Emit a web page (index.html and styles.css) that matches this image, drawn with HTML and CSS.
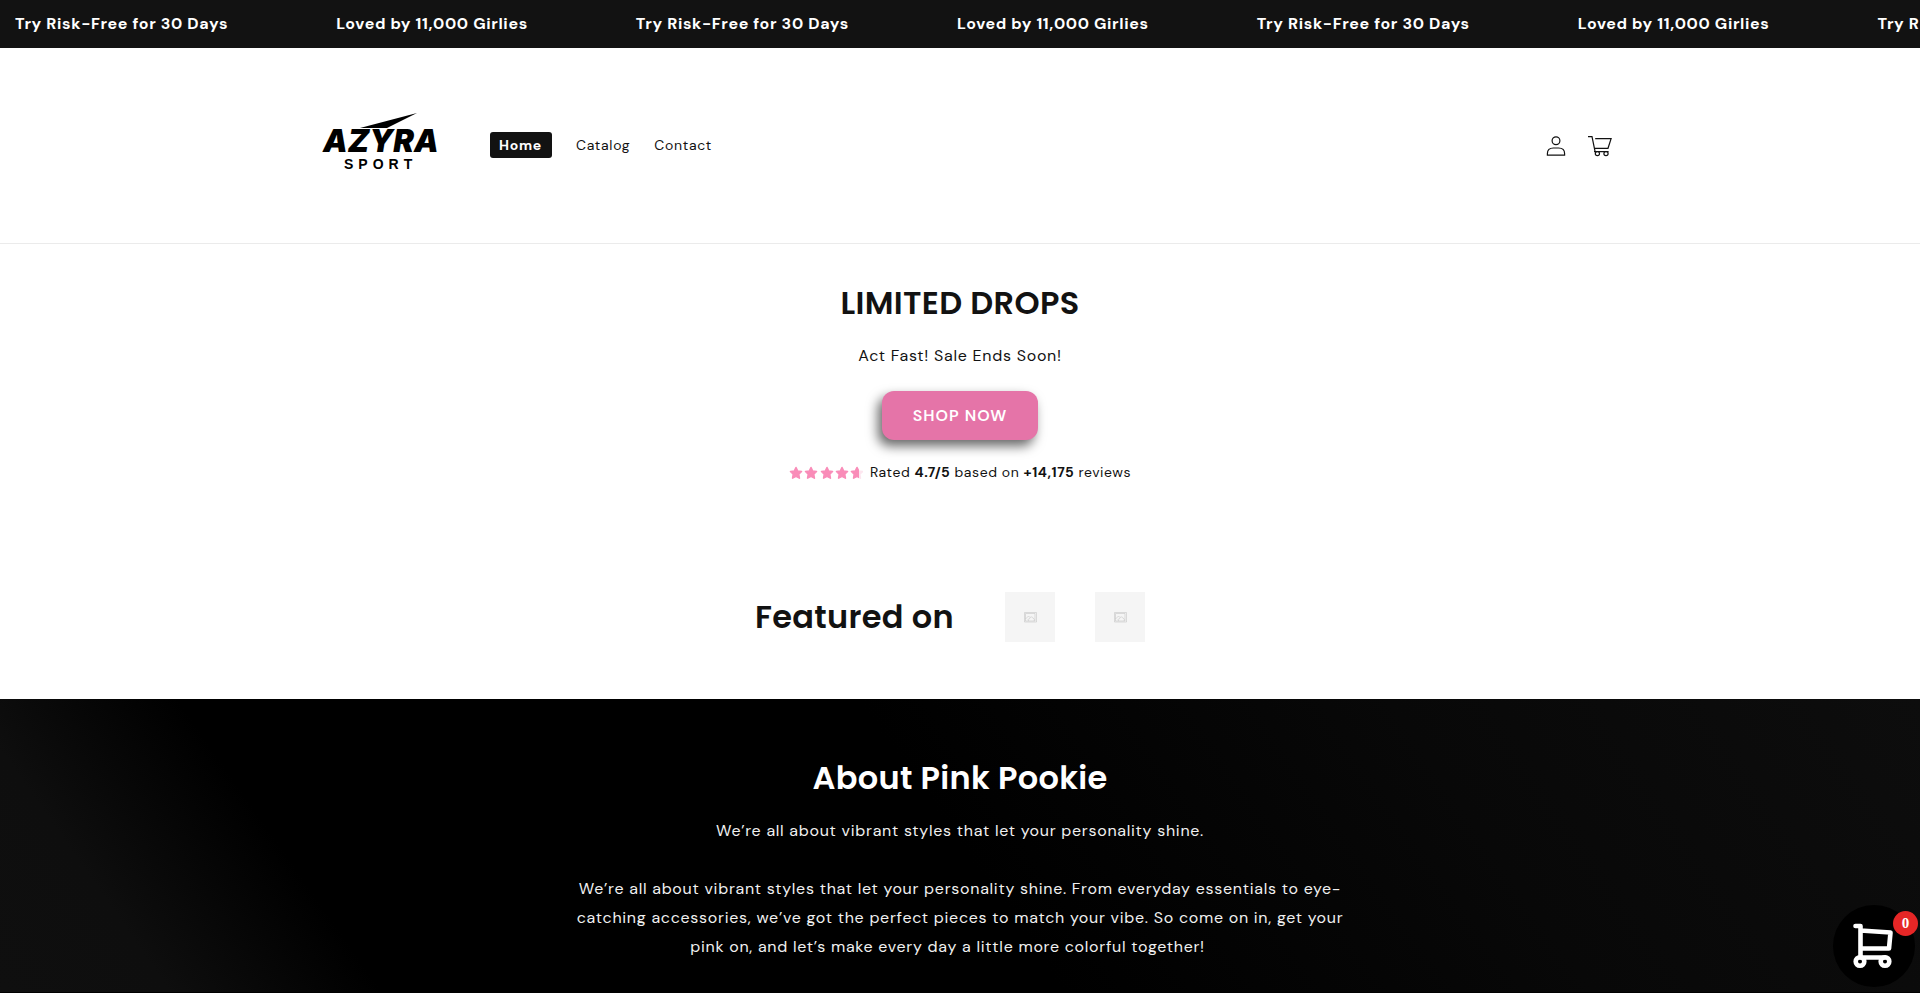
FILE: index.html
```html
<!DOCTYPE html>
<html lang="en">
<head>
<meta charset="utf-8">
<meta name="viewport" content="width=device-width, initial-scale=1">
<title>Azyra Sport</title>
<link rel="stylesheet" href="styles.css">
</head>
<body>
<div class="marquee">
  <span>Try Risk-Free for 30 Days</span>
  <span>Loved by 11,000 Girlies</span>
  <span>Try Risk-Free for 30 Days</span>
  <span>Loved by 11,000 Girlies</span>
  <span>Try Risk-Free for 30 Days</span>
  <span>Loved by 11,000 Girlies</span>
  <span>Try Risk-Free for 30 Days</span>
</div>

<header class="header">
  <div class="header-inner">
    <a class="logo" href="#" aria-label="Azyra Sport">
      <svg width="120" height="64" viewBox="0 0 120 64">
        <path d="M38 16 L95 1 L65 16 Z"/>
        <text class="logo-name" x="1" y="40">AZYRA</text>
        <text class="logo-sub" x="22" y="57">SPORT</text>
      </svg>
    </a>
    <nav class="nav">
      <a class="nav-link current" href="#">Home</a>
      <a class="nav-link" href="#">Catalog</a>
      <a class="nav-link" href="#">Contact</a>
    </nav>
    <div class="header-icons">
      <a href="#" class="icon-link" aria-label="Log in">
        <svg width="20" height="20" viewBox="0 0 20 20" fill="none" stroke="#121212" stroke-width="1.200">
          <circle cx="10" cy="4.700" r="3.900"/>
          <path d="M1.400 19.200V17.600C1.400 14 4 12 7.400 12h5.200c3.400 0 6 2 6 5.600v1.600Z"/>
        </svg>
      </a>
      <a href="#" class="icon-link" aria-label="Cart">
        <svg width="26" height="22" viewBox="0 0 26 22" fill="none" stroke="#121212" stroke-width="1.200">
          <path d="M1 1.600h4l3.200 15.600M8.200 3.600h15.900L21 13.300H7.600M7 16.600h14.600"/>
          <circle cx="10.400" cy="18.600" r="2.100"/>
          <circle cx="19" cy="18.600" r="2.100"/>
        </svg>
      </a>
    </div>
  </div>
</header>

<main>
  <section class="hero">
    <h2>LIMITED DROPS</h2>
    <p class="hero-text">Act Fast! Sale Ends Soon!</p>
    <button class="shop" type="button">SHOP NOW</button>
    <div class="rating">
      <svg class="stars" width="74" height="14" viewBox="0 0 74 14" fill="#f98cb8" stroke="#f98cb8" stroke-linejoin="round" stroke-width="1.600">
        <defs>
          <path id="star" d="M7 1.500l1.700 3.500 3.800.5-2.800 2.700.7 3.900L7 10.300l-3.400 1.800.7-3.900L1.500 5.500l3.800-.5Z"/>
          <clipPath id="part"><rect x="0" y="0" width="9" height="14"/></clipPath>
        </defs>
        <use href="#star"/>
        <use href="#star" x="15"/>
        <use href="#star" x="31"/>
        <use href="#star" x="46"/>
        <g transform="translate(61 0)">
          <use href="#star" fill="#fde6ef" stroke="#fde6ef"/>
          <g clip-path="url(#part)"><use href="#star"/></g>
        </g>
      </svg>
      <p>Rated <strong>4.7/5</strong> based on <strong>+14,175</strong> reviews</p>
    </div>
  </section>

  <section class="featured">
    <h2>Featured on</h2>
    <div class="placeholders">
      <div class="placeholder">
        <svg width="13" height="11" viewBox="0 0 13 11" fill="none" stroke="#bcbcbc" stroke-width="0.500"><path d="M.5.5h12v9.500H.5ZM1.500 9V1.500h9.500V9ZM1.500 7l3-3 1.500 1.500M5 9c-1.500-.5-1-2.500.5-2.200.3-2.300 3.200-2.600 3.700-.3 1.500 0 1.500 2 .5 2.500"/></svg>
      </div>
      <div class="placeholder">
        <svg width="13" height="11" viewBox="0 0 13 11" fill="none" stroke="#bcbcbc" stroke-width="0.500"><path d="M.5.5h12v9.500H.5ZM1.500 9V1.500h9.500V9ZM1.500 7l3-3 1.500 1.500M5 9c-1.500-.5-1-2.500.5-2.200.3-2.300 3.200-2.600 3.700-.3 1.500 0 1.500 2 .5 2.500"/></svg>
      </div>
    </div>
  </section>

  <section class="about">
    <h2>About Pink Pookie</h2>
    <p>We’re all about vibrant styles that let your personality shine.</p>
    <p>We’re all about vibrant styles that let your personality shine. From everyday essentials to eye-catching accessories, we’ve got the perfect pieces to match your vibe. So come on in, get your pink on, and let’s make every day a little more colorful together!&nbsp;&nbsp;&nbsp;&nbsp;&nbsp;</p>
  </section>
</main>

<button class="cart-fab" type="button" aria-label="Open cart, 0 items">
  <svg width="42" height="48" viewBox="0 0 42 48" fill="none" stroke="#fff" stroke-width="4.600" stroke-linecap="round" stroke-linejoin="round">
    <path d="M2.500 4H7.500v31M7.500 8.500L37.500 10.500 36 26.500H7.500M7 35.500H32"/>
    <circle cx="7" cy="39.500" r="4.300"/>
    <circle cx="32" cy="39.500" r="4.300"/>
  </svg>
  <span class="badge">0</span>
</button>
</body>
</html>
```

FILE: styles.css
```css
* { box-sizing: border-box; }

body {
  margin: 0;
  min-height: 100vh;
  display: flex;
  flex-direction: column;
  background: #fff;
  color: #121212;
  font-family: "DM Sans", Inter, "Open Sans", sans-serif;
  font-size: 16px;
  letter-spacing: 0.045em;
  line-height: 29px;
}

h2, p { margin: 0; }

h2 {
  font-family: Poppins, Inter, "Open Sans", sans-serif;
  font-size: 32px;
  font-weight: 600;
  letter-spacing: 0.01em;
  line-height: 42px;
}

a { color: inherit; text-decoration: none; }

.marquee {
  display: flex;
  gap: 108px;
  height: 48px;
  padding: 0 0 2px 15px;
  align-items: center;
  overflow: hidden;
  background: #121212;
  color: #fff;
  font-weight: 700;
  letter-spacing: 0.04em;
  white-space: nowrap;
}

.marquee span { flex: none; }

.header {
  padding: 59px 0 61px;
  border-bottom: 1px solid #ebebeb;
}

.header-inner {
  max-width: 1324px;
  margin: 0 auto;
  padding: 5px 0 5px 24px;
  display: flex;
  align-items: center;
}

.logo { display: flex; height: 65px; }

.logo-name {
  font-family: Inter, sans-serif;
  font-size: 31px;
  font-style: italic;
  font-weight: 900;
  letter-spacing: 0;
}

.logo-sub {
  font-family: "Liberation Sans", sans-serif;
  font-size: 14px;
  font-weight: 700;
  letter-spacing: 5px;
}

.nav {
  display: flex;
  align-items: center;
  gap: 24px;
  margin-left: 48px;
  font-size: 14px;
  letter-spacing: 0.05em;
  line-height: 26px;
}

.nav-link.current {
  padding: 0 10px 0 9px;
  border-radius: 3px;
  background: #121212;
  color: #fff;
  font-weight: 700;
}

.header-icons { display: flex; margin-left: auto; padding-top: 2px; }

.icon-link {
  display: flex;
  align-items: center;
  justify-content: center;
  width: 44px;
  height: 44px;
}

main { flex: 1; display: flex; flex-direction: column; }

.hero {
  display: flex;
  flex-direction: column;
  align-items: center;
  padding: 38px 20px 0;
  text-align: center;
}

.hero-text { margin: 17px 0 21px; }

.shop {
  padding: 0 31px;
  border: 0;
  border-radius: 12px;
  background: #e574a8;
  box-shadow: -4px 6px 12px rgba(0, 0, 0, 0.6);
  color: #fff;
  font: inherit;
  font-weight: 600;
  letter-spacing: 1px;
  line-height: 49px;
}

.rating {
  display: flex;
  align-items: center;
  gap: 7px;
  margin-top: 18px;
  font-size: 14px;
  letter-spacing: 0.04em;
}

.featured {
  display: flex;
  align-items: center;
  justify-content: center;
  gap: 51px;
  padding: 105px 20px 57px 0;
}

.placeholders { display: flex; gap: 40px; }

.placeholder {
  display: flex;
  align-items: center;
  justify-content: center;
  width: 50px;
  height: 50px;
  background: #f5f5f5;
}

.about {
  flex: 1;
  display: flex;
  flex-direction: column;
  align-items: center;
  gap: 29px;
  padding: 58px 20px 29px;
  border-bottom: 1px solid #000;
  background: linear-gradient(55deg, #0f0f0f 0%, #0e0e0e 8%, #000 18%, #000 50%, #080808 75%, #0d0d0d 100%);
  color: #f0f0f0;
  text-align: center;
}

.about h2 { margin-bottom: -12px; color: #fff; }
.about p { max-width: 780px; }

.cart-fab {
  position: fixed;
  right: 5px;
  bottom: 6px;
  display: flex;
  align-items: center;
  justify-content: center;
  width: 82px;
  height: 82px;
  padding: 0;
  border: 0;
  border-radius: 50%;
  background: #000;
}

.badge {
  position: absolute;
  top: 6px;
  right: -3px;
  width: 25px;
  height: 25px;
  border-radius: 50%;
  background: #e62626;
  color: #fff;
  font: 700 15px/25px "Liberation Serif", serif;
  text-align: center;
}
```
